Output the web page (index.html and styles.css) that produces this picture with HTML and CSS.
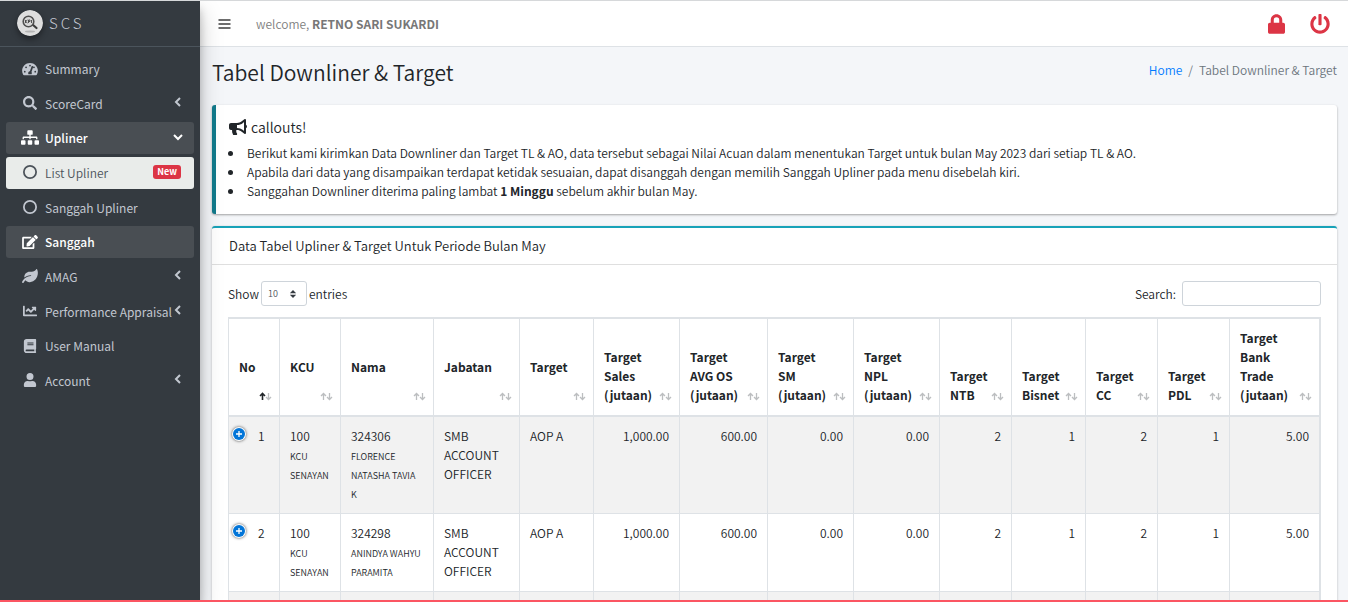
FILE: index.html
```html
<!DOCTYPE html>
<html lang="id">
<head>
<meta charset="utf-8">
<title>SCS - Tabel Downliner &amp; Target</title>
<link rel="stylesheet" href="styles.css">
</head>
<body>
<div class="app">
  <aside class="sidebar">
    <a class="brand" href="#">
      <svg class="brand-logo" viewBox="0 0 26 26" aria-hidden="true">
        <circle cx="13" cy="13" r="13" fill="#dedede"/>
        <ellipse cx="13" cy="21.500" rx="5" ry="1" fill="#b4b4b4"/>
        <path d="M15.500 14.500l4 3.500" stroke="#3c3c3c" stroke-width="2.200" stroke-linecap="round"/>
        <circle cx="11.500" cy="11.500" r="5.300" fill="#d8d8d8" stroke="#505050" stroke-width="1.600"/>
        <path d="M8.500 10v3M8.500 11.500l2-1.500M8.500 11.500l2 1.500M11.500 13v-3h1.500v1.500h-1.500M14.500 10v3" stroke="#444" stroke-width=".9" fill="none"/>
      </svg>
      <span>SCS</span>
    </a>
    <nav class="menu">
      <a class="item" href="#">
        <svg class="ico" viewBox="0 0 576 512"><path fill-rule="evenodd" d="M288 32C129 32 0 161 0 320c0 53 14 102 39 145 6 9 16 15 27 15h444c11 0 21-6 27-15 25-43 39-92 39-145C576 161 447 32 288 32zM288 96a32 32 0 1 1 0 64 32 32 0 1 1 0-64zM96 384a32 32 0 1 1 0-64 32 32 0 1 1 0 64zM144 224a32 32 0 1 1 0-64 32 32 0 1 1 0 64zM388 151c13 4 19 18 15 30l-61 184c20 28 14 52 3 83H231c-25-53 3-107 53-112l60-170c4-12 31-19 44-15zM432 224a32 32 0 1 1 0-64 32 32 0 1 1 0 64zM480 384a32 32 0 1 1 0-64 32 32 0 1 1 0 64z"/></svg>
        <span>Summary</span></a>
      <a class="item" href="#">
        <svg class="ico" viewBox="0 0 512 512"><path d="M505 443 405 343c-4-4-11-7-17-7h-16c28-35 44-80 44-128C416 93 323 0 208 0S0 93 0 208s93 208 208 208c48 0 93-16 128-44v16c0 6 3 13 7 17l100 100c9 9 25 9 34 0l28-28c9-9 9-25 0-34zM208 336a128 128 0 1 1 0-256 128 128 0 1 1 0 256z"/></svg>
        <span>ScoreCard</span><svg class="chev" viewBox="0 0 10 12"><path d="M7 2 3 6l4 4"/></svg></a>
      <a class="item open" href="#">
        <svg class="ico wide" viewBox="0 0 640 512"><path d="M128 352H32a32 32 0 0 0-32 32v96a32 32 0 0 0 32 32h96a32 32 0 0 0 32-32v-96a32 32 0 0 0-32-32zm-24-80h192v48h48v-48h192v48h48v-57c0-22-17-39-39-39H344v-64h40a32 32 0 0 0 32-32V32a32 32 0 0 0-32-32H256a32 32 0 0 0-32 32v96a32 32 0 0 0 32 32h40v64H95c-22 0-39 17-39 39v57h48v-48zm264 80h-96a32 32 0 0 0-32 32v96a32 32 0 0 0 32 32h96a32 32 0 0 0 32-32v-96a32 32 0 0 0-32-32zm240 0h-96a32 32 0 0 0-32 32v96a32 32 0 0 0 32 32h96a32 32 0 0 0 32-32v-96a32 32 0 0 0-32-32z"/></svg>
        <span>Upliner</span><svg class="chev" viewBox="0 0 10 12"><path d="M1 4l4 4 4-4"/></svg></a>
      <a class="item current" href="#">
        <svg class="ico" viewBox="0 0 16 16"><circle class="ring" cx="8" cy="8" r="7"/></svg>
        <span>List Upliner</span><span class="badge">New</span></a>
      <a class="item" href="#">
        <svg class="ico" viewBox="0 0 16 16"><circle class="ring" cx="8" cy="8" r="7"/></svg>
        <span>Sanggah Upliner</span></a>
      <a class="item open" href="#">
        <svg class="ico" viewBox="0 0 576 512"><path d="M403 83l90 90c4 4 4 10 0 14L274 406l-93 10c-12 2-23-9-21-21l10-93L389 83c4-4 10-4 14 0zm162-23-49-49c-15-15-40-15-55 0l-35 36c-4 4-4 10 0 14l90 90c4 4 10 4 14 0l35-36c15-15 15-40 0-55zM384 346v102H64V128h230c3 0 6-1 8-3l40-40c8-8 3-21-8-21H48c-27 0-48 21-48 48v352c0 27 21 48 48 48h352c27 0 48-21 48-48V306c0-11-13-16-21-9l-40 40c-2 3-3 6-3 9z"/></svg>
        <span>Sanggah</span></a>
      <a class="item" href="#">
        <svg class="ico" viewBox="0 0 576 512"><path d="M547 10c-5-13-23-13-30-1-33 58-94 87-165 87h-80c-106 0-192 86-192 192 0 7 1 14 2 21 56-45 131-85 238-85 9 0 16 7 16 16s-7 16-16 16C132 256 26 410 2 468c-7 16 1 35 17 42s35-1 42-17c2-4 19-42 66-80 27 37 82 73 157 67 173-14 292-167 292-345 0-45-10-88-29-125z"/></svg>
        <span>AMAG</span><svg class="chev" viewBox="0 0 10 12"><path d="M7 2 3 6l4 4"/></svg></a>
      <a class="item" href="#">
        <svg class="ico" viewBox="0 0 512 512"><path d="M496 384H64V80a16 16 0 0 0-16-16H16A16 16 0 0 0 0 80v336c0 18 14 32 32 32h464a16 16 0 0 0 16-16v-32a16 16 0 0 0-16-16zM464 96H346c-22 0-32 26-17 41l32 32-73 73-73-73c-13-13-33-13-46 0l-68 68c-6 6-6 16 0 23l23 22c6 7 16 7 22 0l46-45 73 73c13 13 33 13 46 0l96-96 32 32c15 15 41 5 41-17V112a16 16 0 0 0-16-16z"/></svg>
        <span>Performance Appraisal</span><svg class="chev" viewBox="0 0 10 12"><path d="M7 2 3 6l4 4"/></svg></a>
      <a class="item" href="#">
        <svg class="ico" viewBox="0 0 448 512"><path fill-rule="evenodd" d="M448 360V24a24 24 0 0 0-24-24H96C43 0 0 43 0 96v320c0 53 43 96 96 96h328a24 24 0 0 0 24-24v-16c0-8-3-14-9-19-4-15-4-59 0-74 6-4 9-11 9-19zM128 128h224v32H128zm0 64h224v32H128zm253 256H96a32 32 0 0 1 0-64h285c-2 17-2 47 0 64z"/></svg>
        <span>User Manual</span></a>
      <a class="item" href="#">
        <svg class="ico" viewBox="0 0 448 512"><path d="M224 256a128 128 0 1 0 0-256 128 128 0 1 0 0 256zm90 32h-17a174 174 0 0 1-146 0h-17C60 288 0 348 0 422v42c0 27 21 48 48 48h352c27 0 48-21 48-48v-42c0-74-60-134-134-134z"/></svg>
        <span>Account</span><svg class="chev" viewBox="0 0 10 12"><path d="M7 2 3 6l4 4"/></svg></a>
    </nav>
  </aside>

  <div class="page">
    <header class="topbar">
      <button class="plain burger" type="button" aria-label="Menu"><svg viewBox="0 0 12 12"><path d="M0 2h12M0 6h12M0 10h12"/></svg></button>
      <p class="welcome">welcome, <b>RETNO SARI SUKARDI</b></p>
      <button class="plain danger" type="button" aria-label="Lock"><svg class="lock" viewBox="0 0 448 512"><path fill-rule="evenodd" d="M400 224h-24v-72C376 68 308 0 224 0S72 68 72 152v72H48c-27 0-48 21-48 48v192c0 27 21 48 48 48h352c27 0 48-21 48-48V272c0-27-21-48-48-48zm-104 0H152v-72a72 72 0 0 1 144 0v72z"/></svg></button>
      <button class="plain danger" type="button" aria-label="Log out"><svg class="power" viewBox="0 0 512 512"><path d="M400 54c63 45 104 118 104 202 0 137-111 248-248 248S8 393 8 256C8 173 49 99 112 54c11-8 27-5 34 7l16 28c6 11 4 24-6 32-42 31-68 80-68 135 0 93 75 168 168 168s168-75 168-168c0-54-26-103-68-135-10-8-12-21-6-32l16-28c7-12 22-15 34-7zM296 264V24c0-13-11-24-24-24h-32c-13 0-24 11-24 24v240c0 13 11 24 24 24h32c13 0 24-11 24-24z"/></svg></button>
    </header>

    <main class="content">
      <div class="heading">
        <h1>Tabel Downliner &amp; Target</h1>
        <nav class="crumbs"><a href="#">Home</a><span>/</span><span>Tabel Downliner &amp; Target</span></nav>
      </div>

      <section class="callout">
        <h2><svg viewBox="0 0 576 512"><path fill-rule="evenodd" d="M576 240c0-24-13-44-32-55V32c0-9-7-32-32-32-7 0-14 2-20 7l-85 68c-43 34-97 53-151 53H64c-35 0-64 29-64 64v96c0 35 29 64 64 64h34c-6 48 3 96 29 142 5 11 17 18 29 18h74c26 0 42-30 26-51-24-31-30-71-20-109h20c54 0 108 19 151 53l85 68c6 5 13 7 20 7 24 0 32-22 32-32V295c19-11 32-31 32-55zm-96 141-33-26c-54-43-122-67-191-67v-96c69 0 137-24 191-67l33-26v282z"/></svg>callouts!</h2>
        <ul>
          <li>Berikut kami kirimkan Data Downliner dan Target TL &amp; AO, data tersebut sebagai Nilai Acuan dalam menentukan Target untuk bulan May 2023 dari setiap TL &amp; AO.</li>
          <li>Apabila dari data yang disampaikan terdapat ketidak sesuaian, dapat disanggah dengan memilih Sanggah Upliner pada menu disebelah kiri.</li>
          <li>Sanggahan Downliner diterima paling lambat <b>1 Minggu</b> sebelum akhir bulan May.</li>
        </ul>
      </section>

      <section class="card">
        <h3>Data Tabel Upliner &amp; Target Untuk Periode Bulan May</h3>
        <div class="card-body">
          <div class="controls">
            <label>Show <select><option>10</option><option>25</option></select> entries</label>
            <label>Search: <input type="search"></label>
          </div>
          <table>
            <colgroup><col class="c1"><col class="c2"><col class="c3"><col class="c4"><col class="c5"><col class="c4"><col class="c6"><col class="c4"><col class="c4"><col class="c7"><col class="c5"><col class="c7"><col class="c7"><col></colgroup>
            <thead>
              <tr>
                <th class="sorted">No</th><th>KCU</th><th>Nama</th><th>Jabatan</th><th>Target</th>
                <th>Target<br>Sales<br>(jutaan)</th><th>Target<br>AVG OS<br>(jutaan)</th><th>Target<br>SM<br>(jutaan)</th><th>Target<br>NPL<br>(jutaan)</th>
                <th>Target<br>NTB</th><th>Target<br>Bisnet</th><th>Target<br>CC</th><th>Target<br>PDL</th><th>Target<br>Bank<br>Trade<br>(jutaan)</th>
              </tr>
            </thead>
            <tbody>
              <tr>
                <td class="no"><button class="expand" type="button" aria-label="Expand row"><svg viewBox="0 0 14 14"><circle cx="7" cy="7" r="6"/><path d="M7 4v6M4 7h6"/></svg></button>1</td>
                <td>100<br><small>KCU<br>SENAYAN</small></td><td>324306<br><small>FLORENCE<br>NATASHA TAVIA<br>K</small></td><td>SMB<br>ACCOUNT<br>OFFICER</td><td>AOP A</td>
                <td class="n">1,000.00</td><td class="n">600.00</td><td class="n">0.00</td><td class="n">0.00</td><td class="n">2</td><td class="n">1</td><td class="n">2</td><td class="n">1</td><td class="n">5.00</td>
              </tr>
              <tr>
                <td class="no"><button class="expand" type="button" aria-label="Expand row"><svg viewBox="0 0 14 14"><circle cx="7" cy="7" r="6"/><path d="M7 4v6M4 7h6"/></svg></button>2</td>
                <td>100<br><small>KCU<br>SENAYAN</small></td><td>324298<br><small>ANINDYA WAHYU<br>PARAMITA</small></td><td>SMB<br>ACCOUNT<br>OFFICER</td><td>AOP A</td>
                <td class="n">1,000.00</td><td class="n">600.00</td><td class="n">0.00</td><td class="n">0.00</td><td class="n">2</td><td class="n">1</td><td class="n">2</td><td class="n">1</td><td class="n">5.00</td>
              </tr>
              <tr class="next"><td></td><td></td><td></td><td></td><td></td><td></td><td></td><td></td><td></td><td></td><td></td><td></td><td></td><td></td></tr>
            </tbody>
          </table>
        </div>
      </section>
    </main>
  </div>
</div>
</body>
</html>
```

FILE: styles.css
```css
* { box-sizing: border-box; }

body {
  margin: 0;
  height: 100vh;
  padding-bottom: 6px;
  overflow: hidden;
  background: #fff;
  color: #212529;
  font: 350 12px/19px "Noto Sans CJK SC", "Noto Sans", sans-serif;
}

a { color: inherit; text-decoration: none; }
h1, h2, h3, p, ul { margin: 0; font-weight: inherit; }
svg { fill: currentColor; display: block; }

.app {
  display: flex;
  height: 100%;
  overflow: hidden;
  border-top: 1px solid #d6d8da;
  border-bottom: 2px solid #fb5562;
}

/* Sidebar */
.sidebar {
  flex: 0 0 200px;
  min-width: 0;
  z-index: 1;
  background: #343a40;
  color: #c2c7d0;
  box-shadow: 0 11px 22px rgba(0, 0, 0, .22), 0 8px 8px rgba(0, 0, 0, .2);
}

.brand {
  display: flex;
  align-items: center;
  gap: 6px;
  height: 46px;
  padding: 0 17px 2px;
  border-bottom: 1px solid #4b545c;
  font-size: 15px;
  font-weight: 300;
  letter-spacing: 3px;
}

.brand-logo {
  width: 26px;
  height: 26px;
  border-radius: 50%;
  box-shadow: 0 3px 6px rgba(0, 0, 0, .4);
}

.menu {
  display: grid;
  grid-auto-rows: 32px;
  align-content: space-between;
  height: 356px;
  padding: 6px;
}

.item {
  display: flex;
  align-items: center;
  padding: 0 11px 1px 16px;
  border-radius: 3px;
  font-weight: 400;
  white-space: nowrap;
}

.item.open { background: #494e53; color: #fff; font-weight: 500; }
.item.current { background: #e9ecea; color: #4c535a; font-weight: 350; }

.ico { flex: 0 0 16px; width: 16px; height: 14px; margin-right: 7px; }
.ico.wide { height: 15px; flex-basis: 18px; margin: 0 6px 0 -1px; }
.ring { fill: none; stroke: currentColor; stroke-width: 2; }

.chev { flex: 0 0 10px; height: 12px; margin-left: auto; margin-bottom: 2px; }
.chev path { fill: none; stroke: currentColor; stroke-width: 2; }

.badge {
  margin-left: auto;
  margin-right: 2px;
  padding: 0 4px;
  border-radius: 3px;
  background: #dc3545;
  color: #fff;
  font-size: 9px;
  font-weight: 700;
  line-height: 14px;
}

/* Top bar */
.page { flex: 1; min-width: 0; background: #f4f6f9; }

.topbar {
  display: flex;
  align-items: center;
  height: 46px;
  padding: 0 18px;
  background: #fff;
  border-bottom: 1px solid #dee2e6;
}

.plain { padding: 0; border: 0; background: none; color: #6d6d6d; }
.burger svg { width: 13px; height: 12px; }
.burger path { stroke: currentColor; stroke-width: 2; }
.welcome { margin: 0 auto 0 25px; color: #808080; }
.welcome b { color: #777; }
.danger { margin-left: 25px; color: #dc3545; }
.lock { width: 17px; height: 20px; }
.power { width: 20px; height: 20px; }

/* Content */
.content { padding: 12px 11px 0 12px; }
.heading { display: flex; justify-content: space-between; min-height: 46px; }
.heading h1 { font-size: 21px; line-height: 26px; }
.crumbs { display: flex; gap: 6px; line-height: 22px; color: #6c757d; }
.crumbs a { color: #007bff; }

.callout {
  padding: 12px 12px 14px 13px;
  margin-bottom: 12px;
  background: #fff;
  border-left: 4px solid #117a8b;
  border-radius: 3px;
  box-shadow: 0 1px 3px rgba(0, 0, 0, .12), 0 1px 2px rgba(0, 0, 0, .24);
}

.callout h2 {
  display: flex;
  align-items: center;
  gap: 4px;
  margin-bottom: 6px;
  font-size: 14px;
  line-height: 20px;
}

.callout h2 svg { width: 18px; height: 16px; }
.callout ul { padding-left: 15px; }
.callout li { padding-left: 3px; }

.card {
  background: #fff;
  border-top: 2px solid #17a2b8;
  border-radius: 3px;
  box-shadow: 0 0 1px rgba(0, 0, 0, .13), 0 1px 3px rgba(0, 0, 0, .2);
}

.card h3 {
  padding: 8px 17px 9px;
  border-bottom: 1px solid #dfdfdf;
  font-size: 13px;
  line-height: 19px;
}

.card-body { padding: 16px 16px 0; }
.controls { display: flex; justify-content: space-between; margin-bottom: 11px; }
.controls label { display: flex; align-items: center; gap: 2px; }

select, input {
  height: 25px;
  border: 1px solid #ced4da;
  border-radius: 3px;
  background: #fff;
  color: #495057;
  font: inherit;
}

select {
  appearance: none;
  width: 46px;
  padding: 0 6px;
  font-size: 9px;
  background: #fff url("data:image/svg+xml,%3Csvg xmlns='http://www.w3.org/2000/svg' viewBox='0 0 4 5'%3E%3Cpath fill='%23343a40' d='M2 0L0 2h4zm0 5L0 3h4z'/%3E%3C/svg%3E") no-repeat right 9px center / 8px 8px;
}

input { width: 139px; margin-left: 4px; }

/* Table */
table {
  width: 100%;
  table-layout: fixed;
  border-collapse: separate;
  border-spacing: 0;
  border: 1px solid #dee2e6;
  border-left: 0;
}

.c1 { width: 51px; } .c2 { width: 61px; } .c3 { width: 93px; } .c4 { width: 86px; }
.c5 { width: 74px; } .c6 { width: 88px; } .c7 { width: 72px; }

th, td { border-left: 1px solid #dee2e6; padding: 9px 10px 11px; text-align: left; white-space: nowrap; }
th:last-child, td:last-child { border-right: 1px solid #dee2e6; }

th {
  position: relative;
  padding-right: 0;
  border-top: 1px solid #dee2e6;
  border-bottom: 2px solid #dee2e6;
  font-weight: 700;
  vertical-align: middle;
}

th:nth-child(n+6) { vertical-align: bottom; }

th::after {
  content: "";
  position: absolute;
  right: 7px;
  bottom: 14px;
  width: 13px;
  height: 9px;
  background: url("data:image/svg+xml,%3Csvg xmlns='http://www.w3.org/2000/svg' viewBox='0 0 13 9' fill='none' stroke='%23bcbec0' stroke-width='1.3'%3E%3Cpath d='M3.500 8V2M1 4l2.500-2.500L6 4M9.500 1v6M7 5l2.500 2.500L12 5'/%3E%3C/svg%3E");
}

th.sorted::after {
  background: url("data:image/svg+xml,%3Csvg xmlns='http://www.w3.org/2000/svg' viewBox='0 0 13 9' fill='none' stroke-width='1.3'%3E%3Cpath stroke='%23212529' stroke-width='1.600' d='M3.500 8V2M1 4l2.500-2.500L6 4'/%3E%3Cpath stroke='%23bcbec0' d='M9.500 1v6M7 5l2.500 2.500L12 5'/%3E%3C/svg%3E");
}

td { vertical-align: top; border-bottom: 1px solid #dee2e6; }
tbody tr:nth-child(odd) td { background: #f2f2f2; }
td small { font-size: 9px; line-height: 1; }
.n { text-align: right; }
td.no { position: relative; padding-left: 29px; }

.expand {
  position: absolute;
  left: 3px;
  top: 10px;
  padding: 0;
  border: 0;
  background: none;
}

.expand svg { width: 14px; height: 14px; border-radius: 50%; box-shadow: 0 0 3px #444; background: #fff; }
.expand circle { fill: #0275d8; }
.expand path { stroke: #fff; stroke-width: 1.3; }
.next td { height: 97px; }
```
